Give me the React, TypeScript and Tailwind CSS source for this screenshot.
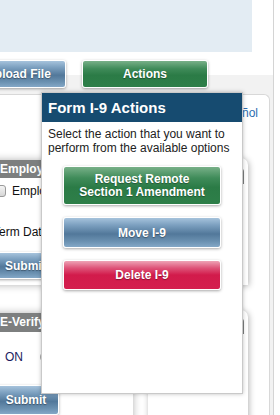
import { ReactNode } from 'react';

const blueBtn =
  'bg-[linear-gradient(to_bottom,#a6c3dc_0%,#7b9fbf_25%,#52789a_55%,#6a90b0_80%,#84a8c7_100%)]';
const greenBtn =
  'bg-[linear-gradient(to_bottom,#78b088_0%,#3f8b59_30%,#2b7b46_55%,#2e7f49_100%)]';
const redBtn =
  'bg-[linear-gradient(to_bottom,#eea3b5_0%,#de5479_25%,#d21b4b_50%,#d41f4e_100%)]';

const Btn = ({ className, children }: { className: string; children: ReactNode }) => (
  <div
    className={`flex shrink-0 items-center justify-center text-center rounded-[3px] border border-white text-white font-bold shadow-[0_1px_3px_rgba(0,0,0,0.35)] [text-shadow:0_1px_1px_rgba(0,0,0,0.35)] ${className}`}
  >
    {children}
  </div>
);

const ActionsPopover = () => (
  <div className="absolute left-[41px] top-[92px] w-[202px] h-[302px] bg-white border border-[#c9c9c9] shadow-[0_0_4px_rgba(0,0,0,0.25)] z-20">
    <div className="h-[29px] bg-[#164b70] text-white font-bold text-[15px] leading-[29px] pl-[6px]">
      Form I-9 Actions
    </div>
    <div className="pt-[5px] pl-[6px] pr-[4px] text-[12px] leading-[14px] text-[#222]">
      Select the action that you want to perform from the available options
    </div>
    <div className="flex flex-col items-center gap-[12px] mt-[11px]">
      <Btn className={`w-[158px] h-[39px] text-[12px] leading-[13px] ${greenBtn}`}>
        Request Remote
        <br />
        Section 1 Amendment
      </Btn>
      <Btn className={`w-[158px] h-[31px] text-[12px] ${blueBtn}`}>Move I-9</Btn>
      <Btn className={`w-[158px] h-[30px] text-[12px] ${redBtn}`}>Delete I-9</Btn>
    </div>
  </div>
);

export default function App() {
  return (
    <div className="relative w-[280px] h-[415px] overflow-hidden bg-white font-['Liberation_Sans',Arial,sans-serif]">
      <div className="w-[274px] h-[415px] border-r border-[#d4d4d4]">
        <div className="w-[252px] h-[52px] bg-[#e3ecf3]" />
        <div className="h-[8px]" />
        <div className="relative z-10 h-[28px] flex">
          <Btn className={`-ml-[29px] w-[95px] h-[28px] text-[12px] ${blueBtn}`}>Upload File</Btn>
          <Btn className={`ml-[16px] w-[126px] h-[28px] text-[12px] ${greenBtn}`}>Actions</Btn>
        </div>
        <div className="-mt-[13px] pt-[19px] h-[340px] bg-[#f2f2f2]">
          <div className="w-[270px] h-[321px] bg-white border-t border-r border-[#d8d8d8] rounded-tr-[6px] overflow-hidden">
            <div className="h-[26px] pt-[11px] pr-[11px] text-right text-[12px] leading-[14px] text-[#2c6eb0]">
              Español
            </div>
            <div className="flex">
              <div className="-ml-[17px] w-[150px] shrink-0 flex flex-col gap-[28px] mt-[39px]">
                <div className="bg-white shadow-[0_0_8px_rgba(0,0,0,0.3)] text-[12px] text-[#111]">
                  <div className="h-[18px] bg-[#7d7f7f] text-white font-bold text-[12px] leading-[18px] pl-[17px] whitespace-nowrap">
                    Employee Status
                  </div>
                  <div className="pl-[10px] pt-[7px] pb-[6px]">
                    <div className="flex items-center gap-[6px] h-[12px]">
                      <span className="w-[13px] h-[12px] rounded-[3px] border border-[#9a9a9a] bg-[linear-gradient(to_bottom,#f4f4f4,#d6d6d6)]" />
                      <span className="whitespace-nowrap">Employee Terminated</span>
                    </div>
                    <div className="mt-[28px] leading-[14px] whitespace-nowrap">Term Date</div>
                    <Btn className={`mt-[13px] w-[80px] h-[27px] text-[12px] justify-start pl-[11px] ${blueBtn}`}>
                      Submit
                    </Btn>
                  </div>
                </div>
                <div className="h-[140px] bg-white shadow-[0_0_8px_rgba(0,0,0,0.3)] text-[12px] text-[#111]">
                  <div className="h-[19px] bg-[#7d7f7f] text-white font-bold text-[12px] leading-[19px] pl-[17px] whitespace-nowrap">
                    E-Verify Status
                  </div>
                  <div className="pl-[10px] pt-[18px]">
                    <div className="flex items-center h-[14px]">
                      <span className="ml-[12px] text-[#1b1b60]">ON</span>
                      <span className="ml-[17px] w-[12px] h-[12px] rounded-full border border-[#aaa] bg-[#f2f2f2]" />
                      <span className="ml-[4px]">OFF</span>
                    </div>
                    <Btn className={`mt-[21px] w-[66px] h-[30px] text-[12px] ${blueBtn}`}>Submit</Btn>
                  </div>
                </div>
              </div>
              <div className="ml-auto mr-[21px] w-[100px] shrink-0 flex flex-col gap-[25px] mt-[37px]">
                <div className="h-[127px] bg-white rounded-t-[7px] shadow-[1px_1px_6px_rgba(0,0,0,0.3)] p-[4px]">
                  <div className="h-[16px] mt-[6px] bg-[#7d7f7f] rounded-tr-[4px]" />
                </div>
                <div className="h-[160px] bg-white rounded-t-[7px] shadow-[1px_1px_6px_rgba(0,0,0,0.3)] p-[4px]">
                  <div className="h-[16px] mt-[4px] bg-[#7d7f7f] rounded-tr-[4px]" />
                </div>
              </div>
            </div>
          </div>
        </div>
      </div>
      <ActionsPopover />
    </div>
  );
}
